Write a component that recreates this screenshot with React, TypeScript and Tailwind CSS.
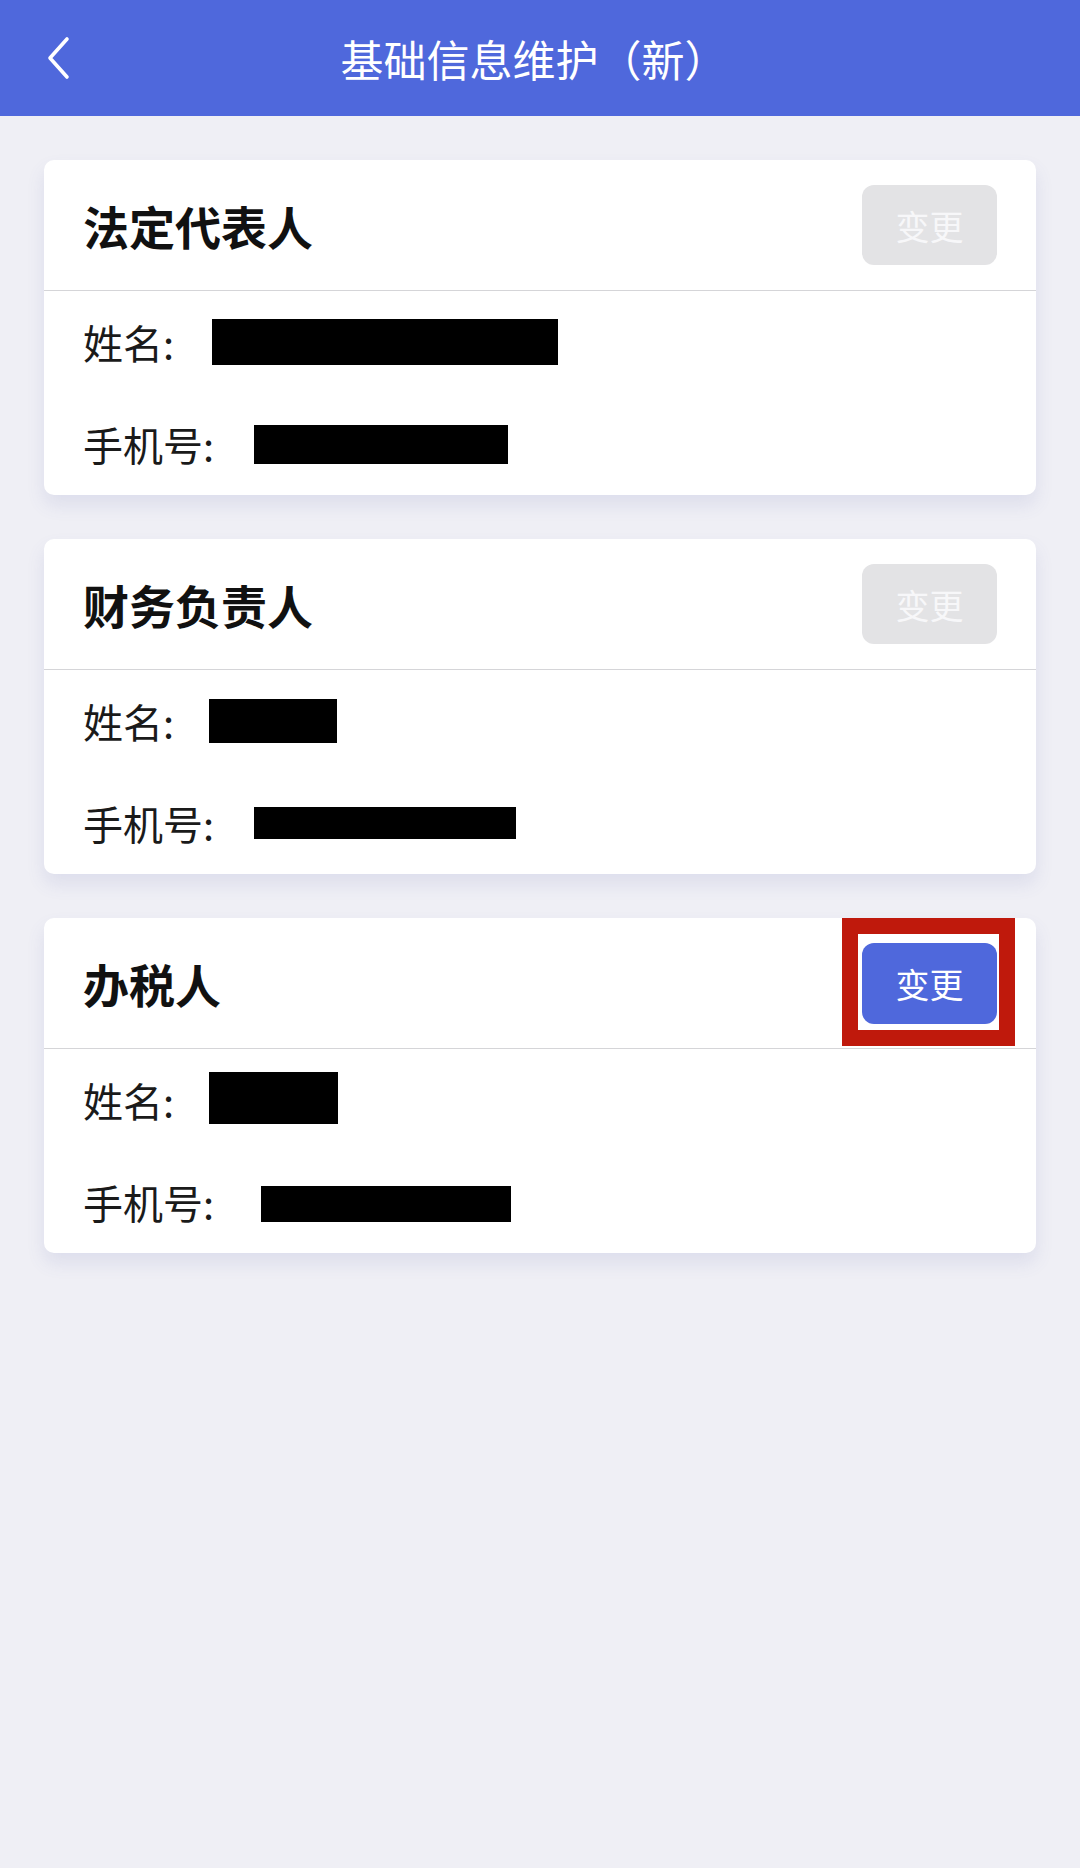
import React from "react";

type Row = { label: string; box: string };
type Card = { title: string; active: boolean; rows: Row[] };

const cards: Card[] = [
  {
    title: "法定代表人",
    active: false,
    rows: [
      { label: "姓名:", box: "ml-[38px] w-[346px] h-[46px]" },
      { label: "手机号:", box: "ml-[40px] w-[254px] h-[39px]" },
    ],
  },
  {
    title: "财务负责人",
    active: false,
    rows: [
      { label: "姓名:", box: "ml-[35px] w-[128px] h-[44px]" },
      { label: "手机号:", box: "ml-[40px] w-[262px] h-[32px]" },
    ],
  },
  {
    title: "办税人",
    active: true,
    rows: [
      { label: "姓名:", box: "ml-[35px] w-[129px] h-[52px] -translate-y-[2px]" },
      { label: "手机号:", box: "ml-[47px] w-[250px] h-[36px] translate-y-[2px]" },
    ],
  },
];

function ChangeButton({ active }: { active: boolean }) {
  if (!active) {
    return (
      <button className="w-[135px] h-[80px] rounded-[12px] bg-[#e3e3e5] text-[34px] text-[#f7f7f9]">
        变更
      </button>
    );
  }
  return (
    <div className="relative">
      <button className="w-[135px] h-[81px] rounded-[12px] bg-[#4f68dc] text-[34px] text-white">
        变更
      </button>
      <div className="absolute -left-[20px] -top-[25px] -right-[18px] -bottom-[22px] border-[16px] border-[#bf190c]" />
    </div>
  );
}

export default function App() {
  return (
    <div
      className="min-h-[1868px] w-[1080px] bg-[#efeff5]"
      style={{ fontFamily: '"Noto Sans CJK SC", "Noto Sans", sans-serif' }}
    >
      <div className="h-[116px] bg-[#4f68dc] flex items-center">
        <div className="w-[140px] pl-[45px] flex items-center">
          <svg width="26" height="44" viewBox="0 0 26 44" fill="none">
            <polyline
              points="22,3 5,22 22,41"
              stroke="white"
              strokeWidth="3.6"
              strokeLinecap="round"
              strokeLinejoin="round"
            />
          </svg>
        </div>
        <div className="flex-1 text-center text-white text-[43px] leading-none pr-[12px]">
          基础信息维护（新）
        </div>
        <div className="w-[140px]" />
      </div>

      <div className="px-[44px] pt-[44px] flex flex-col gap-[44px]">
        {cards.map((card) => (
          <div
            key={card.title}
            className="bg-white rounded-[10px] shadow-[0_10px_18px_rgba(90,100,170,0.12)]"
          >
            <div className="h-[131px] flex items-center justify-between pl-[39px] pr-[39px] border-b border-[#d5d5d8]">
              <div className="text-[46px] font-bold text-[#111] leading-none">{card.title}</div>
              <ChangeButton active={card.active} />
            </div>
            <div>
              {card.rows.map((row) => (
                <div key={row.label} className="h-[102px] flex items-center pl-[39px]">
                  <span className="text-[40px] text-[#1a1a1a] leading-none">{row.label}</span>
                  <span className={"bg-black " + row.box} />
                </div>
              ))}
            </div>
          </div>
        ))}
      </div>
    </div>
  );
}
